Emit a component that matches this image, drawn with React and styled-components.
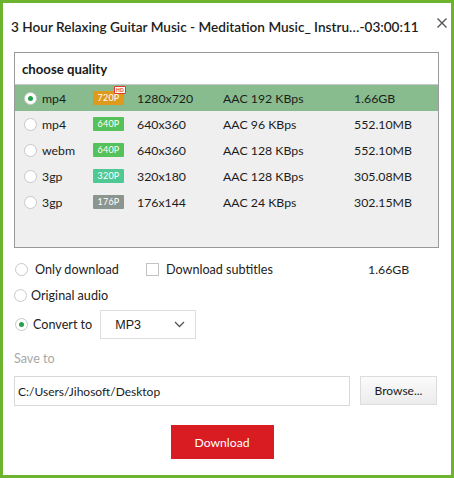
import React from "react";
import styled, { createGlobalStyle } from "styled-components";

const Global = createGlobalStyle`
  html, body { margin: 0; padding: 0; background: #fff; }
  body { font-family: Lato, "Open Sans", Arial, sans-serif; color: #222; }
  * { box-sizing: border-box; }
`;

const Window = styled.div`
  width: 454px;
  height: 478px;
  border: 3px solid #6cb32e;
  background: #fff;
  padding: 0 12px 0 11px;
  display: flex;
  flex-direction: column;
`;

const Header = styled.div`
  display: flex;
  justify-content: space-between;
  align-items: flex-start;
  margin-right: -8px;
  margin-left: -3px;
`;

const Title = styled.div`
  padding-top: 15px;
  font-size: 13.6px;
  font-weight: 600;
  line-height: 18px;
  color: #1d1d1d;
  white-space: nowrap;
`;

const Close = styled.div`
  flex-shrink: 0;
  margin-top: 9px;
  width: 10px;
  height: 10px;
`;

const QualityBox = styled.div`
  margin-top: 16px;
  height: 196px;
  border: 1px solid #9a9a9a;
  background: #efefef;
  display: flex;
  flex-direction: column;
`;

const BoxHeader = styled.div`
  height: 32px;
  background: #fff;
  border-bottom: 1px solid #c9c9c9;
  display: flex;
  align-items: center;
  padding-left: 7px;
  font-size: 13.2px;
  font-weight: 700;
  color: #1a1a1a;
`;

const Row = styled.div`
  height: 26px;
  display: grid;
  grid-template-columns: 18px 51px 44px 86px 131px 1fr;
  align-items: center;
  padding-left: 9px;
  font-size: 12.3px;
  color: #1c1c1c;
  background: ${(p) => (p.$active ? "#88bc8e" : "transparent")};
`;

const RadioCircle = styled.span`
  width: 13px;
  height: 13px;
  border-radius: 50%;
  border: 1px solid #c8c8c8;
  background: #fff;
  display: inline-flex;
  align-items: center;
  justify-content: center;
  flex-shrink: 0;
  &::after {
    content: "";
    width: 5px;
    height: 5px;
    border-radius: 50%;
    background: ${(p) => (p.$on ? "#23a34a" : "transparent")};
  }
`;

const Badge = styled.span`
  position: relative;
  display: block;
  width: 31px;
  height: 14px;
  border-radius: 1px;
  background: ${(p) => p.$color};
  color: #fff;
  font-size: 9px;
  line-height: 14px;
  text-align: center;
  letter-spacing: 0.2px;
`;

const HdTag = styled.span`
  position: absolute;
  top: -5px;
  right: -2px;
  background: #fff;
  color: #e0342c;
  font-size: 5px;
  font-weight: 700;
  line-height: 6px;
  padding: 0 1px;
  border-radius: 1px;
  border: 0.5px solid #e0342c;
`;

const Options = styled.div`
  margin-top: 8px;
  display: flex;
  flex-direction: column;
`;

const OptRow = styled.div`
  height: ${(p) => p.$h || 26}px;
  margin-top: ${(p) => p.$mt || 0}px;
  display: flex;
  align-items: center;
  font-size: 12.6px;
  color: #222;
`;

const OptLabel = styled.label`
  display: flex;
  align-items: center;
  gap: ${(p) => p.$gap || 6}px;
  width: ${(p) => (p.$w ? p.$w + "px" : "auto")};
  padding-left: ${(p) => p.$pl || 0}px;
`;

const CheckBox = styled.span`
  width: 13px;
  height: 13px;
  border: 1px solid #c3c3c3;
  background: #fff;
`;

const SizeText = styled.span`
  font-size: 12.3px;
`;

const Select = styled.div`
  margin-left: 8px;
  width: 96px;
  height: 29px;
  border: 1px solid #dedede;
  background: #fff;
  display: flex;
  align-items: center;
  justify-content: space-between;
  padding: 0 10px 0 14px;
  font-size: 12.5px;
  font-family: "Liberation Sans", Arial, sans-serif;
  color: #1a1a1a;
`;

const SaveLabel = styled.div`
  margin-top: 12px;
  font-size: 12.6px;
  line-height: 16px;
  color: #a8a8a8;
`;

const PathRow = styled.div`
  margin-top: 9px;
  display: flex;
  align-items: flex-start;
  gap: 10px;
`;

const PathInput = styled.div`
  width: 336px;
  height: 30px;
  border: 1px solid #d8d8d8;
  display: flex;
  align-items: center;
  padding-left: 3px;
  font-size: 12px;
  color: #1a1a1a;
`;

const BrowseButton = styled.div`
  width: 77px;
  height: 29px;
  border: 1px solid #dcdcdc;
  background: linear-gradient(#fbfbfb, #ececec);
  display: flex;
  align-items: center;
  justify-content: center;
  font-size: 12px;
  color: #1a1a1a;
`;

const DownloadButton = styled.div`
  align-self: center;
  margin-top: 19px;
  margin-right: 9px;
  width: 103px;
  height: 34px;
  background: #d81c22;
  color: #fff;
  display: flex;
  align-items: center;
  justify-content: center;
  font-size: 12.2px;
`;

const rows = [
  { fmt: "mp4", badge: "720P", color: "#dd9a1c", hd: true, res: "1280x720", audio: "AAC 192 KBps", size: "1.66GB", active: true },
  { fmt: "mp4", badge: "640P", color: "#55c15a", res: "640x360", audio: "AAC 96 KBps", size: "552.10MB" },
  { fmt: "webm", badge: "640P", color: "#55c15a", res: "640x360", audio: "AAC 128 KBps", size: "552.10MB" },
  { fmt: "3gp", badge: "320P", color: "#4ec995", res: "320x180", audio: "AAC 128 KBps", size: "305.08MB" },
  { fmt: "3gp", badge: "176P", color: "#8b9590", res: "176x144", audio: "AAC 24 KBps", size: "302.15MB" },
];

export default function App() {
  return (
    <>
      <Global />
      <Window>
        <Header>
          <Title>3 Hour Relaxing Guitar Music - Meditation Music_ Instru…-03:00:11</Title>
          <Close>
            <svg width="10" height="10" viewBox="0 0 10 10">
              <path d="M0.5 0.5 L9.5 9.5 M9.5 0.5 L0.5 9.5" stroke="#555" strokeWidth="1.4" />
            </svg>
          </Close>
        </Header>
        <QualityBox>
          <BoxHeader>choose quality</BoxHeader>
          {rows.map((r, i) => (
            <Row key={i} $active={r.active}>
              <RadioCircle $on={r.active} />
              <span>{r.fmt}</span>
              <span>
                <Badge $color={r.color}>
                  {r.badge}
                  {r.hd && <HdTag>HD</HdTag>}
                </Badge>
              </span>
              <span>{r.res}</span>
              <span>{r.audio}</span>
              <span>{r.size}</span>
            </Row>
          ))}
        </QualityBox>
        <Options>
          <OptRow>
            <OptLabel $w={132} $pl={1} $gap={7}>
              <RadioCircle />
              Only download
            </OptLabel>
            <OptLabel $w={222} $gap={7}>
              <CheckBox />
              Download subtitles
            </OptLabel>
            <SizeText>1.66GB</SizeText>
          </OptRow>
          <OptRow>
            <OptLabel $gap={4}>
              <RadioCircle />
              Original audio
            </OptLabel>
          </OptRow>
          <OptRow $h={29} $mt={2}>
            <OptLabel $pl={1} $gap={5}>
              <RadioCircle $on />
              Convert to
            </OptLabel>
            <Select>
              MP3
              <svg width="11" height="7" viewBox="0 0 11 7">
                <path d="M1 1 L5.5 5.5 L10 1" stroke="#555" strokeWidth="1.3" fill="none" />
              </svg>
            </Select>
          </OptRow>
        </Options>
        <SaveLabel>Save to</SaveLabel>
        <PathRow>
          <PathInput>C:/Users/Jihosoft/Desktop</PathInput>
          <BrowseButton>Browse...</BrowseButton>
        </PathRow>
        <DownloadButton>Download</DownloadButton>
      </Window>
    </>
  );
}
